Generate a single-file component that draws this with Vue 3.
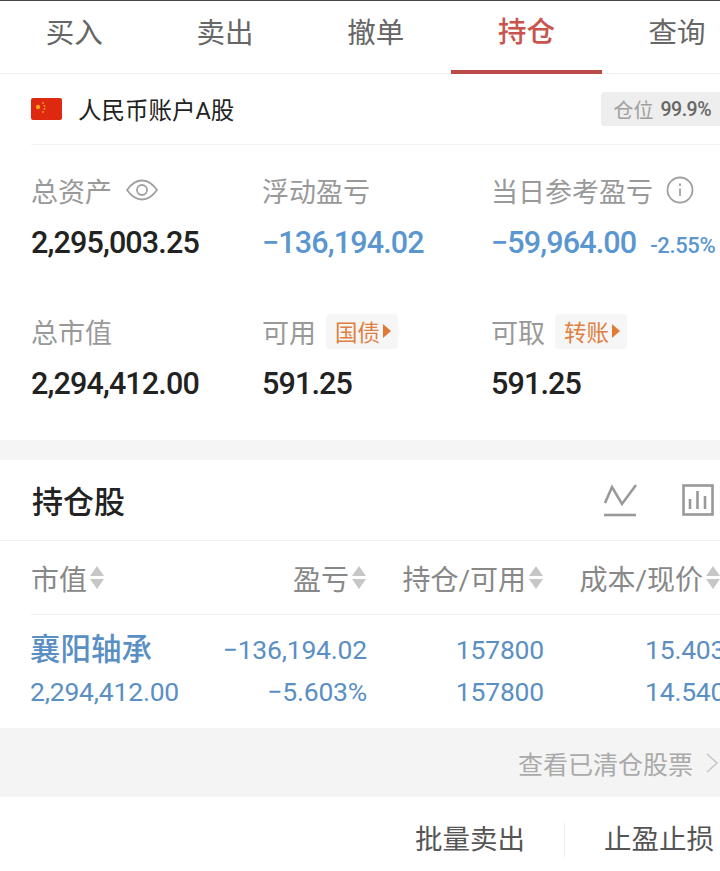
<script setup>
const tabs = [
  { name: '买入' },
  { name: '卖出' },
  { name: '撤单' },
  { name: '持仓', active: true },
  { name: '查询' },
]
const heads = [
  { name: '市值', cls: 'c1' },
  { name: '盈亏', cls: 'c2' },
  { name: '持仓/可用', cls: 'c3' },
  { name: '成本/现价', cls: 'c4' },
]
</script>

<template>
  <div class="page">
    <nav class="tabs">
      <div v-for="t in tabs" :key="t.name" class="tab" :class="{ active: t.active }">{{ t.name }}</div>
    </nav>

    <section class="account">
      <div class="acct-row">
        <svg class="flag" viewBox="0 0 31 22" width="31" height="22">
          <rect width="31" height="22" rx="2" fill="#de2910" />
          <circle cx="7" cy="9" r="2.2" fill="#f0a020" />
          <circle cx="12" cy="5" r="0.9" fill="#f0a020" />
          <circle cx="13.5" cy="8" r="0.9" fill="#f0a020" />
          <circle cx="13.5" cy="11" r="0.9" fill="#f0a020" />
          <circle cx="12" cy="14" r="0.9" fill="#f0a020" />
        </svg>
        <span class="acct-name">人民币账户A股</span>
        <span class="pos"><span class="pos-l">仓位</span><span class="pos-n">99.9%</span></span>
      </div>

      <div class="stats">
        <div class="stat">
          <div class="label">总资产
            <svg class="eye" viewBox="0 0 32 24" width="32" height="24" fill="none" stroke="#a0a0a0" stroke-width="1.8">
              <path d="M1 12C6 5 11 2.5 16 2.5S26 5 31 12c-5 7-10 9.500-15 9.500S6 19 1 12Z" />
              <circle cx="16" cy="12" r="5" />
            </svg>
          </div>
          <div class="val">2,295,003.25</div>
        </div>
        <div class="stat">
          <div class="label">浮动盈亏</div>
          <div class="val blue">−136,194.02</div>
        </div>
        <div class="stat">
          <div class="label">当日参考盈亏
            <svg class="info" viewBox="0 0 28 28" width="28" height="28" fill="none" stroke="#a0a0a0" stroke-width="1.8">
              <circle cx="14" cy="14" r="12.5" />
              <path d="M14 12.500V20" />
              <path d="M14 7.500v2.400" />
            </svg>
          </div>
          <div class="val blue nowrap">−59,964.00<span class="pct">-2.55%</span></div>
        </div>
        <div class="stat">
          <div class="label">总市值</div>
          <div class="val">2,294,412.00</div>
        </div>
        <div class="stat">
          <div class="label">可用<span class="chip">国债<i class="tri"></i></span></div>
          <div class="val">591.25</div>
        </div>
        <div class="stat">
          <div class="label">可取<span class="chip">转账<i class="tri"></i></span></div>
          <div class="val">591.25</div>
        </div>
      </div>
    </section>

    <section class="holdings">
      <div class="hold-head">
        <h2>持仓股</h2>
        <svg class="ic-line" viewBox="0 0 34 34" width="34" height="34" fill="none" stroke="#999" stroke-width="2.600">
          <path d="M2 20 9 4l10 17L33 2" />
          <path d="M1 32h32" />
        </svg>
        <svg class="ic-bar" viewBox="0 0 32 32" width="32" height="32" fill="none" stroke="#999" stroke-width="2.600">
          <rect x="1.500" y="1.500" width="29" height="29" />
          <path d="M8 15v10M15.500 7v18M23 12v13" />
        </svg>
      </div>

      <div class="thead">
        <div v-for="h in heads" :key="h.name" class="th" :class="h.cls">
          {{ h.name }}<span class="sort"><i class="up"></i><i class="down"></i></span>
        </div>
      </div>

      <div class="trow">
        <div class="td col1">
          <div class="stock">襄阳轴承</div>
          <div class="num">2,294,412.00</div>
        </div>
        <div class="td col2">
          <div class="num">−136,194.02</div>
          <div class="num">−5.603%</div>
        </div>
        <div class="td col3">
          <div class="num">157800</div>
          <div class="num">157800</div>
        </div>
        <div class="td col4">
          <div class="num">15.403</div>
          <div class="num">14.540</div>
        </div>
      </div>
    </section>

    <div class="cleared">
      <span>查看已清仓股票</span>
      <svg viewBox="0 0 12 20" width="12" height="20" fill="none" stroke="#c8c8c8" stroke-width="1.600">
        <path d="M1 1l10 9-10 9" />
      </svg>
    </div>

    <div class="actions">
      <span class="act first">批量卖出</span>
      <span class="act">止盈止损</span>
    </div>
  </div>
</template>

<style>
html, body { margin: 0; background: #fff; overflow: hidden; }
</style>

<style scoped>
.page {
  width: 720px;
  height: 871px;
  overflow: hidden;
  background: #fff;
  border-top: 1px solid #444;
  box-sizing: border-box;
  font-family: Roboto, "Noto Sans CJK SC", sans-serif;
}
.tabs {
  display: flex;
  height: 73px;
  margin-left: -1px;
  border-bottom: 1px solid #eee;
  box-sizing: border-box;
}
.tab {
  flex: 0 0 150.7px;
  text-align: center;
  font-size: 28.5px;
  line-height: 66px;
  color: #666;
  box-sizing: border-box;
  height: 73px;
}
.tab.active {
  color: #c9544d;
  font-weight: 500;
  line-height: 64px;
  border-bottom: 4px solid #b94a48;
}
.account {
  border-bottom: 20px solid #f5f5f5;
  padding-left: 31px;
  height: 386px;
  box-sizing: border-box;
}
.acct-row {
  display: flex;
  align-items: center;
  height: 70px;
  border-bottom: 1px solid #f2f2f2;
}
.flag { flex: none; margin-top: -1px; }
.acct-name {
  margin-left: 16px;
  font-size: 23.5px;
  color: #222;
}
.pos {
  display: flex;
  align-items: center;
  gap: 7px;
  margin-left: auto;
  height: 34px;
  background: #eeeeee;
  border-radius: 3px 0 0 3px;
  padding: 0 9px 0 12px;
  white-space: nowrap;
}
.pos-l { color: #a0a0a0; font-size: 20px; }
.pos-n { color: #666; font-size: 19.5px; font-weight: 500; letter-spacing: -0.5px; }
.stats {
  display: grid;
  grid-template-columns: 231px 229px 1fr;
  grid-auto-rows: 141px;
  padding-top: 27px;
}
.label {
  display: flex;
  align-items: center;
  height: 36px;
  font-size: 27px;
  color: #999;
  white-space: nowrap;
}
.eye { margin-left: 14px; }
.info { margin-left: 13px; }
.val {
  margin-top: 16px;
  font-size: 30.500px;
  font-weight: 500;
  line-height: 38px;
  color: #222;
  letter-spacing: -0.85px;
  white-space: nowrap;
}
.blue { color: #5a96cf; }
.pct { font-size: 22px; margin-left: 14px; letter-spacing: -0.4px; }
.chip {
  display: inline-flex;
  align-items: center;
  height: 35px;
  margin-left: 10px;
  padding: 0 7px 0 9px;
  background: #f6f6f6;
  border-radius: 4px;
  font-size: 22.5px;
  color: #e08040;
}
.tri {
  width: 0;
  height: 0;
  margin-left: 3px;
  border-left: 8px solid #e07a35;
  border-top: 7px solid transparent;
  border-bottom: 7px solid transparent;
}
.hold-head {
  display: flex;
  align-items: center;
  height: 81px;
  padding-left: 32px;
  border-bottom: 1px solid #f0f0f0;
  box-sizing: border-box;
}
h2 {
  margin: -2px 0 0;
  font-size: 31px;
  font-weight: 500;
  color: #222;
}
.ic-line { margin-left: auto; }
.ic-bar { margin-left: 45px; margin-right: 6px; }
.thead {
  display: flex;
  height: 74px;
  align-items: center;
  margin-left: 31px;
  border-bottom: 1px solid #eee;
  box-sizing: border-box;
}
.th {
  display: flex;
  align-items: center;
  font-size: 28px;
  color: #888;
  white-space: nowrap;
  flex: none;
}
.c1 { width: 177px; }
.c2 { width: 158px; justify-content: flex-end; }
.c3 { width: 177px; justify-content: flex-end; }
.c4 { width: 177px; justify-content: flex-end; }
.sort {
  display: inline-flex;
  flex-direction: column;
  gap: 3px;
  margin-left: 3px;
}
.up, .down {
  width: 0;
  height: 0;
  border-left: 7px solid transparent;
  border-right: 7px solid transparent;
}
.up { border-bottom: 10px solid #c6c6c6; }
.down { border-top: 10px solid #c6c6c6; }
.trow {
  display: flex;
  height: 113px;
  margin-left: 30px;
  padding-top: 14px;
  box-sizing: border-box;
}
.td {
  flex: none;
  white-space: nowrap;
  color: #5a8fc4;
  display: flex;
  flex-direction: column;
}
.col1 { width: 178px; }
.col2 { width: 159px; align-items: flex-end; }
.col3 { width: 177px; align-items: flex-end; }
.col4 { width: 176px; padding-left: 101px; box-sizing: border-box; }
.stock { font-size: 30.500px; font-weight: 500; line-height: 42px; height: 42px; }
.num { font-size: 26.500px; line-height: 42px; letter-spacing: -0.2px; }
.cleared {
  display: flex;
  align-items: center;
  justify-content: flex-end;
  height: 69px;
  background: #f4f4f4;
  padding-right: 2px;
  gap: 13px;
  font-size: 25px;
  color: #aaa;
}
.actions {
  display: flex;
  align-items: center;
  height: 74px;
  padding-top: 12px;
  box-sizing: border-box;
  justify-content: flex-end;
  padding-right: 6px;
}
.act { font-size: 27.500px; line-height: 34px; color: #555; }
.act.first {
  padding-right: 39px;
  margin-right: 39px;
  border-right: 1px solid #eee;
}
</style>
